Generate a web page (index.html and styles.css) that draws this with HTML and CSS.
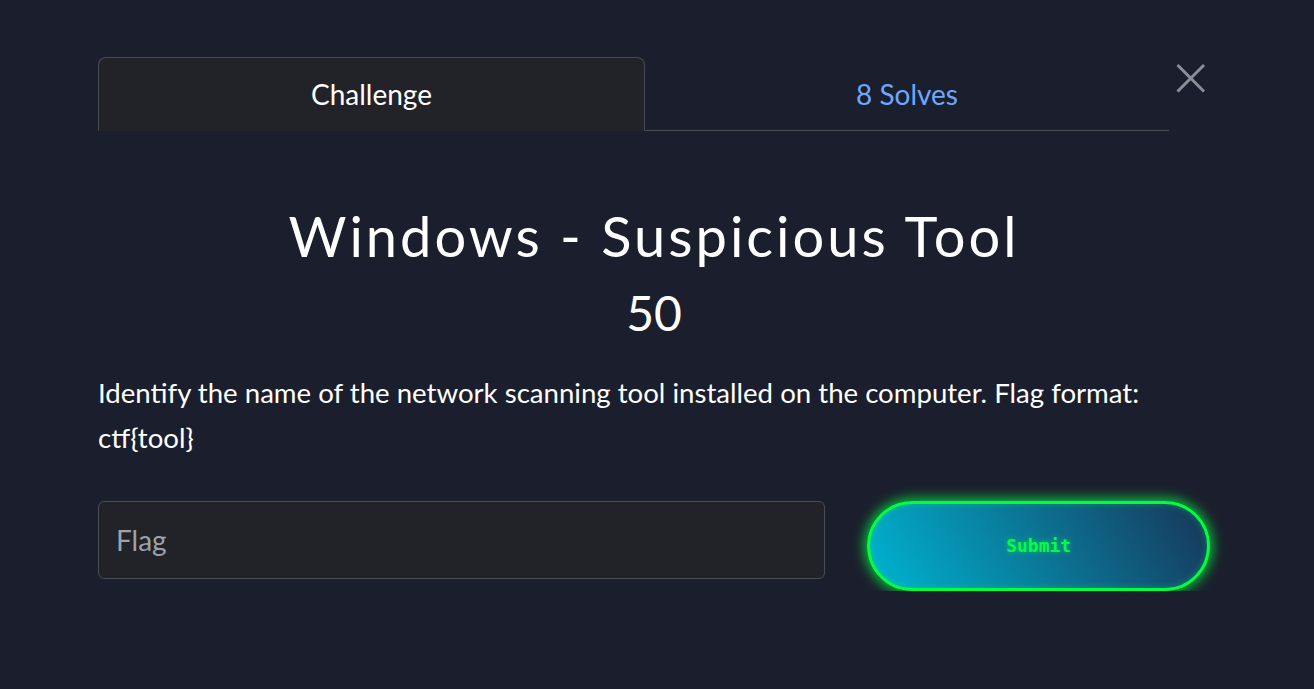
FILE: index.html
```html
<!DOCTYPE html>
<html lang="en">
<head>
<meta charset="utf-8">
<title>Windows - Suspicious Tool</title>
<link rel="stylesheet" href="styles.css">
</head>
<body>
<div class="modal">
  <div class="header">
    <nav class="tabs">
      <a class="tab active">Challenge</a>
      <a class="tab link">8 Solves</a>
    </nav>
    <button class="close" aria-label="Close">
      <svg width="30" height="30" viewBox="0 0 30 30"><path d="M2.5 2L29 28.5M29 2L2.5 28.5" stroke="#8a8f99" stroke-width="3" fill="none"/></svg>
    </button>
  </div>
  <h1 class="title">Windows - Suspicious Tool</h1>
  <div class="points">50</div>
  <p class="desc">Identify the name of the network scanning tool installed on the computer. Flag format: ctf{tool}</p>
  <form class="submit-row">
    <input class="flag" type="text" placeholder="Flag">
    <button class="submit" type="button">Submit</button>
  </form>
</div>
</body>
</html>
```

FILE: styles.css
```css
html, body {
  margin: 0;
  padding: 0;
  background: #1b1f2d;
  font-family: Lato, "Noto Sans", sans-serif;
  color: #ffffff;
}

.modal {
  width: 1112px;
  padding: 57px 0 0 98px;
}

.header {
  display: flex;
  align-items: flex-start;
}

.tabs {
  display: flex;
  width: 1071px;
  border-bottom: 1px solid #4b4f58;
}

.tab {
  flex: 1;
  height: 72px;
  display: flex;
  align-items: center;
  justify-content: center;
  font-size: 28px;
  border: 1px solid transparent;
  border-radius: 8px 8px 0 0;
  margin-bottom: -1px;
}

.tab.active {
  background: #212329;
  border-color: #474b54;
  border-bottom-color: #212329;
  color: #ffffff;
  flex: 0 0 545px;
}

.tab.link {
  color: #6ea8fe;
}

.close {
  background: none;
  border: 0;
  padding: 0;
  margin: 6px 0 0 6px;
  width: 30px;
  height: 30px;
  display: flex;
}

.title {
  margin: 71px 0 0;
  font-size: 56px;
  font-weight: 400;
  line-height: 1.2;
  letter-spacing: 3px;
  text-align: center;
}

.points {
  margin-top: 15px;
  font-size: 48px;
  line-height: 1.2;
  text-align: center;
}

.desc {
  margin: 28px 0 0;
  font-size: 27.6px;
  line-height: 45px;
}

.submit-row {
  display: flex;
  align-items: flex-start;
  margin-top: 41px;
}

.flag {
  box-sizing: border-box;
  width: 728px;
  height: 78px;
  background: #212328;
  border: 1px solid #4a4d56;
  border-radius: 6px;
  padding: 0 17px;
  font-family: Lato, "Noto Sans", sans-serif;
  font-size: 28px;
  color: #fff;
  outline: none;
}

.flag::placeholder {
  color: #9da1a8;
}

.submit {
  box-sizing: border-box;
  margin-left: 42px;
  width: 343px;
  height: 90px;
  border: 3px solid #00ff41;
  border-radius: 45px;
  background: linear-gradient(60deg, #00b4d2 0%, #0a7c9c 45%, #173659 100%);
  box-shadow: 0 0 12px 3px rgba(0, 255, 65, 0.7), inset 0 0 6px rgba(0, 255, 65, 0.35);
  color: #00ff41;
  font-family: "DejaVu Sans Mono", "Liberation Mono", monospace;
  font-weight: bold;
  font-size: 18px;
  text-shadow: 0 0 6px rgba(0, 255, 65, 0.6);
  padding: 0;
}
```
